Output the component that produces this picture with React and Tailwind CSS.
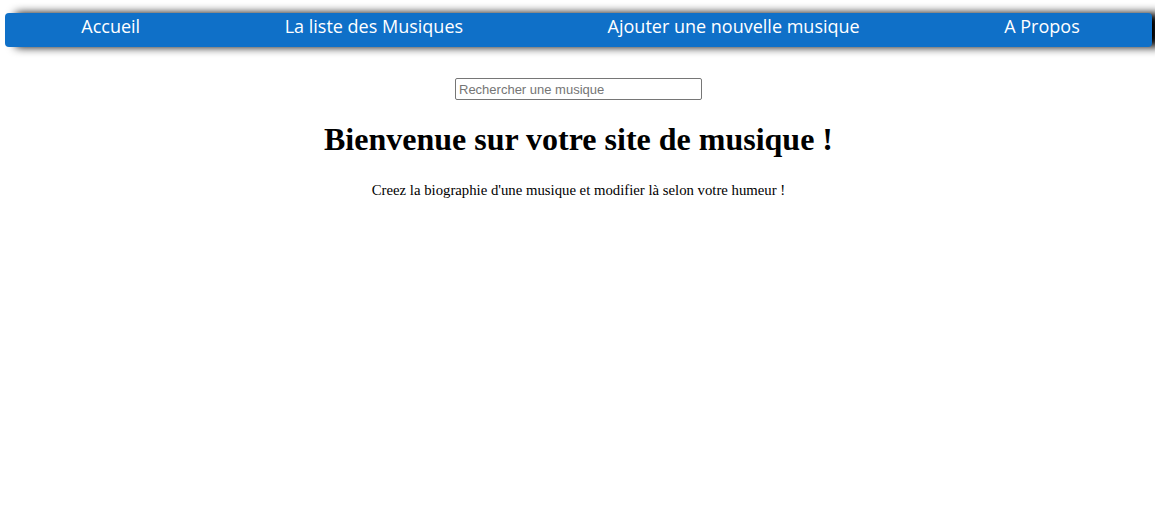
import React from 'react';

const links = ['Accueil', 'La liste des Musiques', 'Ajouter une nouvelle musique', 'A Propos'];

const App = () => {
    return (
        <div className="min-h-screen bg-white pt-[13px]" style={{ fontFamily: '"Liberation Serif", serif' }}>
            <nav className="ml-[5px] mr-[3px] flex h-[34px] items-center justify-around rounded-[4px] bg-[#0f70c8] pb-[9px] pl-[4px] shadow-[10px_0_10px_#000]">
                {links.map((label) => (
                    <a
                        key={label}
                        href="#"
                        className="text-[18px] leading-[24px] text-white font-['Open_Sans',sans-serif]"
                    >
                        {label}
                    </a>
                ))}
            </nav>

            <div className="flex flex-col items-center pl-[2px]">
                <input
                    type="text"
                    placeholder="Rechercher une musique"
                    className="mt-[31px] h-[22px] w-[247px] rounded-[2px] border border-[#767676] px-[3px] text-[13px] font-['Liberation_Sans',sans-serif] placeholder:text-[#757575]"
                />
                <h1 className="mt-[21px] text-[32px] font-bold leading-[37px]">
                    Bienvenue sur votre site de musique !
                </h1>
                <p className="mt-[23px] text-[14.75px] leading-[18px]">
                    Creez la biographie d'une musique et modifier là selon votre humeur !
                </p>
            </div>
        </div>
    );
};

export default App;
